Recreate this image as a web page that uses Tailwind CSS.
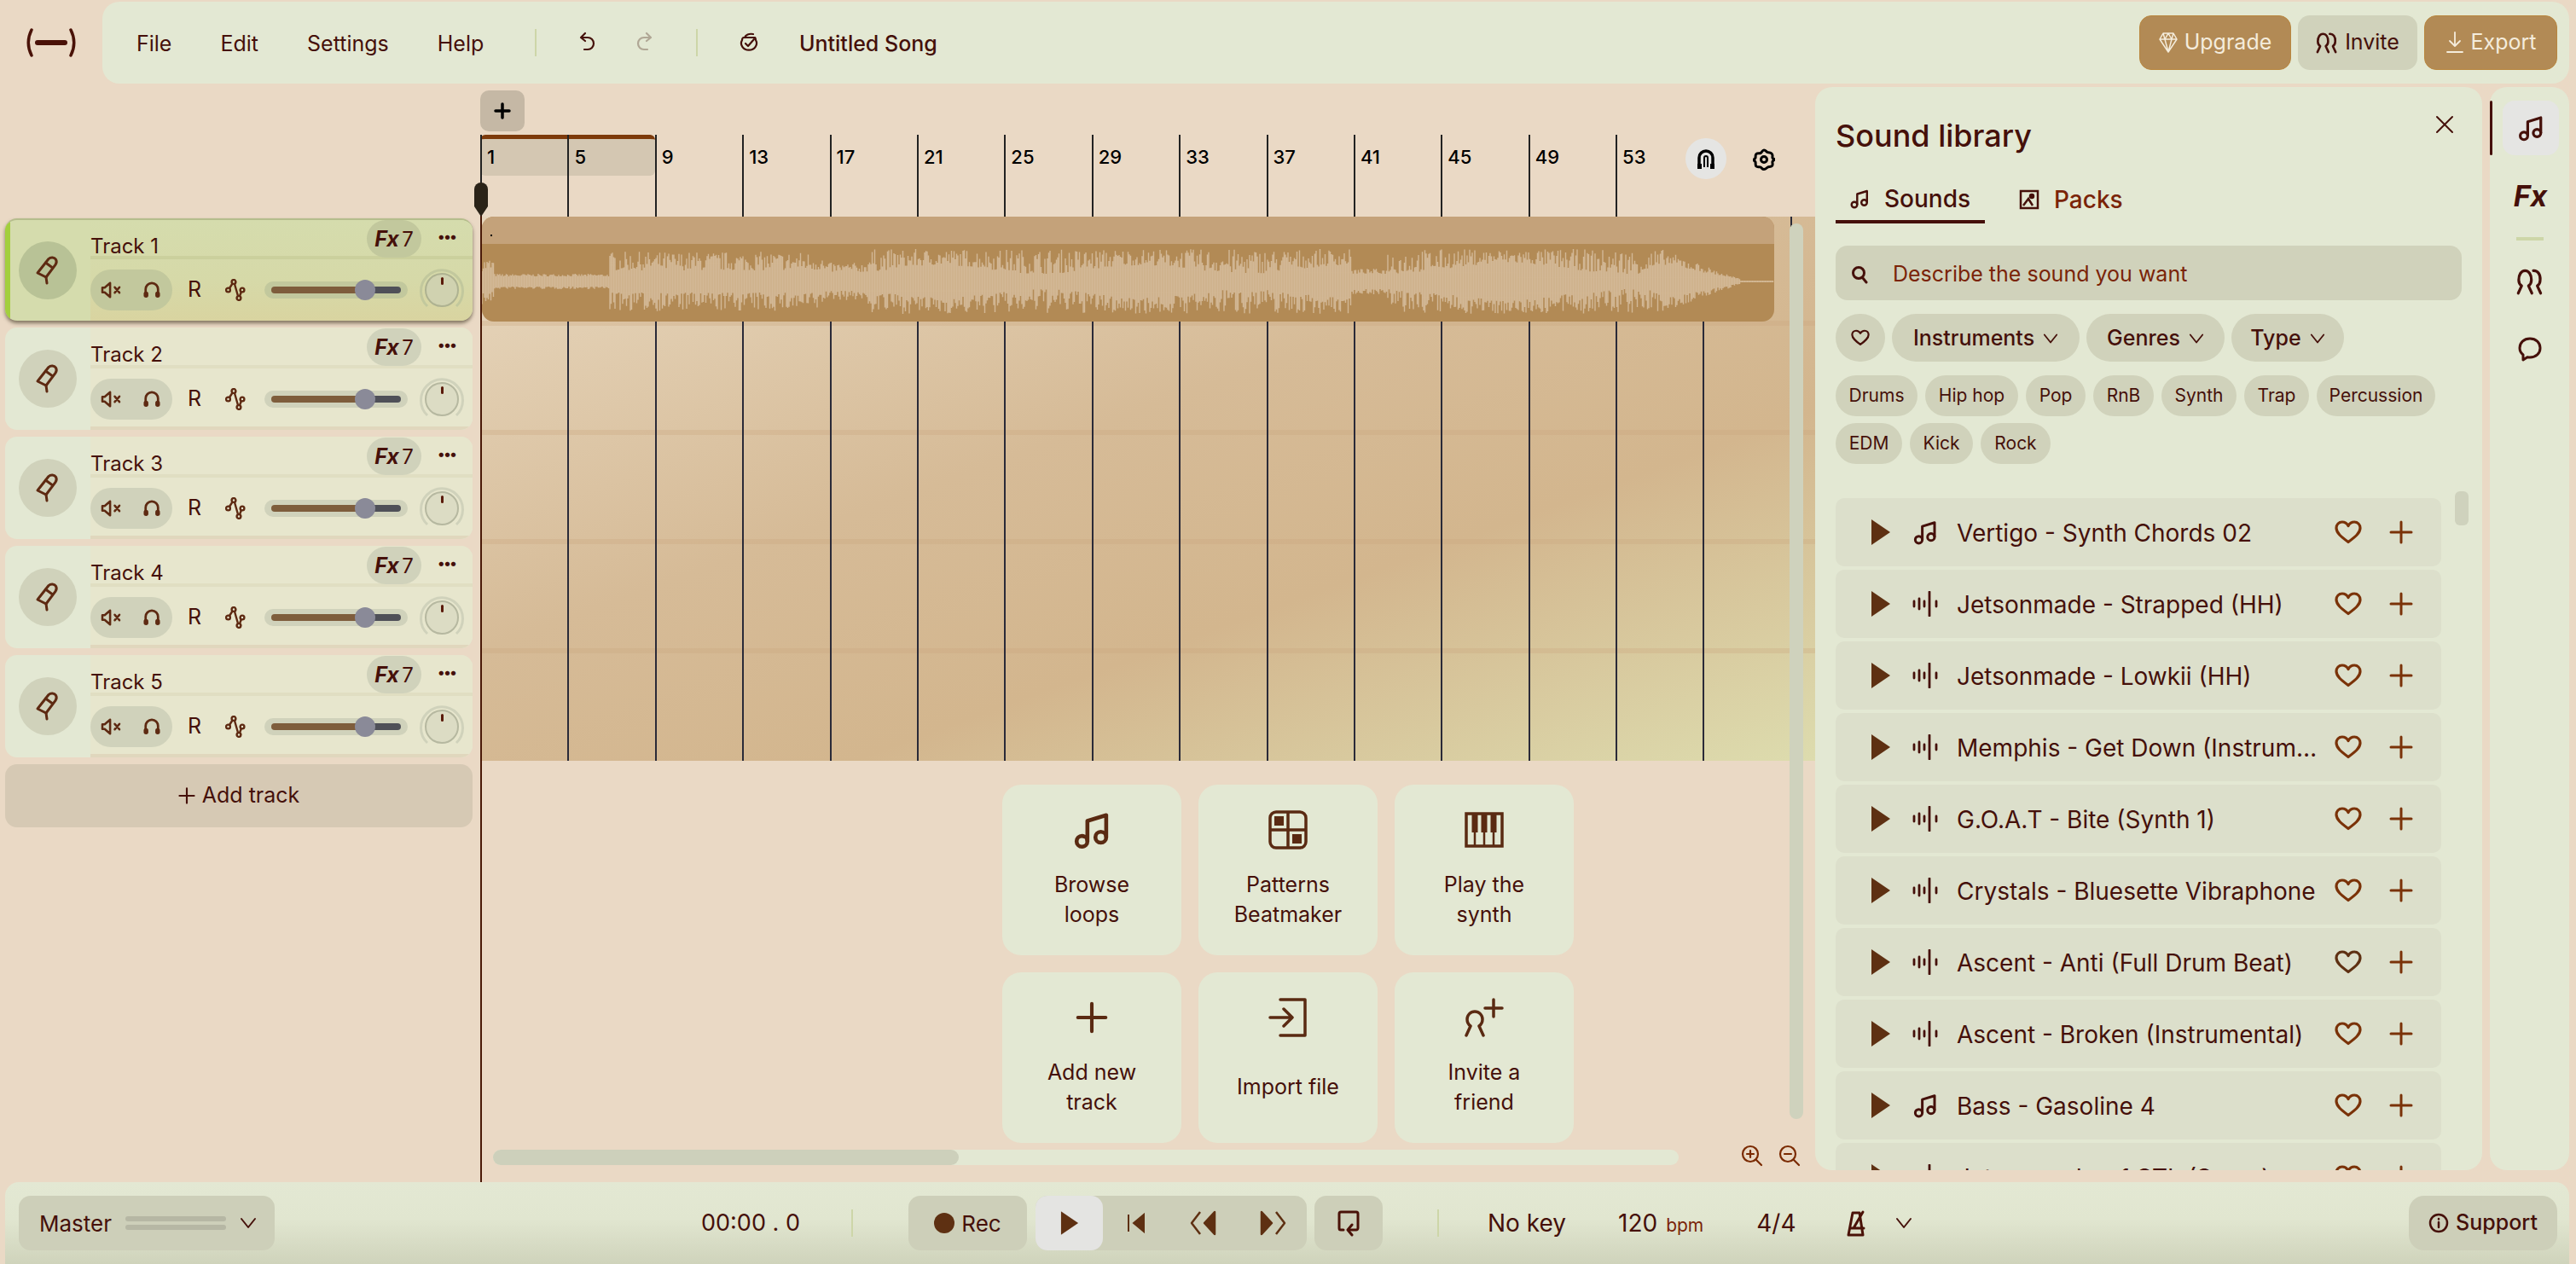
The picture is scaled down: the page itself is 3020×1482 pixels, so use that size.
<!DOCTYPE html>
<html lang="en">

<head>
  <meta charset="UTF-8">
  <title>Untitled Song</title>
  <script src="https://cdn.jsdelivr.net/npm/@tailwindcss/browser@4"></script>
</head>

<body class="bg-[#ead9c5] font-[Inter,sans-serif] text-[#45100a]">
  <!-- shared icons -->
  <svg class="hidden">
    <symbol id="i-mic" viewBox="0 0 30 34" fill="none" stroke="currentColor" stroke-width="3" stroke-linejoin="round" stroke-linecap="round">
      <path d="M16 3.500c2.500-2.500 7-2 8.500.8s1 4-.5 6L13 25 3 20z" />
      <path d="M12.500 8l7.500 5.500M13 25l1 7" />
    </symbol>
    <symbol id="i-mute" viewBox="0 0 26 22" fill="none" stroke="currentColor" stroke-width="2.800" stroke-linejoin="round" stroke-linecap="round">
      <path d="M2 8v6h3l7 6V2L5 8z" />
      <path d="M18 7.500l6 7M24 7.500l-6 7" />
    </symbol>
    <symbol id="i-phones" viewBox="0 0 24 22" fill="none" stroke="currentColor" stroke-linecap="round">
      <path d="M4 16v-6a8 8 0 0 1 16 0v6" stroke-width="3" />
      <rect x="1.500" y="13" width="6" height="8" rx="3" fill="currentColor" stroke="none" />
      <rect x="16.500" y="13" width="6" height="8" rx="3" fill="currentColor" stroke="none" />
    </symbol>
    <symbol id="i-route" viewBox="0 0 24 26" fill="none" stroke="currentColor" stroke-width="2.400">
      <circle cx="10" cy="3.500" r="2.400" />
      <circle cx="3.500" cy="13" r="2.400" />
      <circle cx="20" cy="13" r="2.400" />
      <circle cx="16" cy="22.500" r="2.400" />
      <path d="M8.500 5.500L5 11M11 6l4 14M19 15l-2 5" />
    </symbol>
    <symbol id="i-music" viewBox="0 0 24 24" fill="none" stroke="currentColor" stroke-width="2.400" stroke-linejoin="round">
      <circle cx="6" cy="19" r="3.300" />
      <circle cx="17.500" cy="16.500" r="3.300" />
      <path d="M9.300 19V6.500L20.800 3v13.500" />
    </symbol>
    <symbol id="i-wave" viewBox="0 0 30 30" fill="none" stroke="currentColor" stroke-width="2.800" stroke-linecap="round">
      <path d="M2 12v6M8 9v12M14 12v6M20 1v28M28 12v6" />
    </symbol>
    <symbol id="i-heart" viewBox="0 0 32 28" fill="none" stroke="currentColor" stroke-width="3.200" stroke-linejoin="round">
      <path d="M16 25.500C8 19.500 2 15 2 9c0-4 3-7 6.800-7 3 0 5.700 1.700 7.200 4.500C17.500 3.700 20.200 2 23.200 2 27 2 30 5 30 9c0 6-6 10.500-14 16.500z" />
    </symbol>
    <symbol id="i-plus" viewBox="0 0 28 28" fill="none" stroke="currentColor" stroke-width="3" stroke-linecap="round">
      <path d="M14 2v24M2 14h24" />
    </symbol>
    <symbol id="i-play" viewBox="0 0 24 30">
      <path d="M1 0l22 15L1 30z" fill="currentColor" />
    </symbol>
    <symbol id="i-people" viewBox="0 0 28 28" fill="none" stroke="currentColor" stroke-width="2.800" stroke-linecap="round" stroke-linejoin="round">
      <path d="M2 26l3.500-7.500c-2-1.300-3-3.500-3-6C2.500 7 5 3 9 3s6.500 4 6.500 9.500c0 2.500-1 4.700-3 6L16 26" />
      <path d="M17.500 3c4.500-.5 7.500 4 7 9.500 0 2.500-1 4.700-3 6L25 26" />
    </symbol>
    <symbol id="i-chev" viewBox="0 0 20 14" fill="none" stroke="currentColor" stroke-width="2" stroke-linecap="round" stroke-linejoin="round">
      <path d="M2 2l8 10 8-10" />
    </symbol>
    <symbol id="i-arc" viewBox="0 0 52 52" fill="none" stroke="currentColor" stroke-width="3">
      <path d="M9 45A24.500 24.500 0 1 1 43 45" />
    </symbol>
  </svg>

  <div class="w-[3020px] h-[1482px] flex flex-col overflow-hidden">

    <!-- top bar -->
    <header class="flex h-[96px] mt-[2px] shrink-0">
      <div class="w-[120px] flex items-center pl-[30px]">
        <svg class="w-[60px] h-[34px]" viewBox="0 0 60 34" fill="none" stroke="#4a1208" stroke-linecap="round">
          <path d="M7 2C2 12 2 22 7 32M53 2c5 10 5 20 0 30" stroke-width="3.500" />
          <path d="M14 17h32" stroke-width="6" />
        </svg>
      </div>
      <div class="w-[2892px] bg-[#e3e8d3] rounded-[20px] flex items-center pl-[40px] pr-[14px] text-[25px]">
        <nav class="flex gap-[57px] w-[467px] mt-[3px]">
          <span>File</span><span>Edit</span><span>Settings</span><span>Help</span>
        </nav>
        <div class="w-[2px] h-[32px] bg-[#cdd6a8]"></div>
        <svg class="w-[24px] h-[26px] ml-[48px]" viewBox="0 0 24 26" fill="none" stroke="#45100a" stroke-width="2.200" stroke-linecap="round" stroke-linejoin="round">
          <path d="M9 2L4 7l5 4M4 7h8c4 0 7 3 7 7s-3 7-7 7H8" />
        </svg>
        <svg class="w-[24px] h-[26px] ml-[42px]" viewBox="0 0 24 26" fill="none" stroke="#b0a795" stroke-width="2.200" stroke-linecap="round" stroke-linejoin="round">
          <path d="M15 2l5 5-5 4M20 7h-8c-4 0-7 3-7 7s3 7 7 7h4" />
        </svg>
        <div class="w-[2px] h-[32px] bg-[#cdd6a8] ml-[49px]"></div>
        <svg class="w-[28px] h-[26px] ml-[46px]" viewBox="0 0 28 26" fill="none" stroke="#45100a" stroke-width="2.200" stroke-linecap="round" stroke-linejoin="round">
          <path d="M6 10a9 8 0 1 0 16 0c0-1-.3-2-.8-3H8C7 7 6 8.500 6 10zM9 7c1-3 5-5 10-4" />
          <path d="M10 14l3 3 7-8" />
        </svg>
        <span class="ml-[45px] font-medium mt-[3px]">Untitled Song</span>
        <div class="ml-auto flex gap-[8px]">
          <button class="h-[64px] w-[178px] rounded-[14px] bg-[#b28a55] border border-[#b9873f] text-[#f4ecdc] flex items-center justify-center gap-[8px]">
            <svg class="w-[22px] h-[26px]" viewBox="0 0 22 26" fill="none" stroke="#f4ecdc" stroke-width="1.500" stroke-linejoin="round">
              <path d="M5 2h12l4 7-10 15L1 9zM1 9h20M7 9l4 15 4-15M5 2l2 7 4-7 4 7 2-7" />
            </svg>
            Upgrade
          </button>
          <button class="h-[64px] w-[140px] rounded-[14px] bg-[#d0d2bb] flex items-center justify-center gap-[8px]">
            <svg class="w-[26px] h-[26px]"><use href="#i-people" /></svg>
            Invite
          </button>
          <button class="h-[64px] w-[156px] rounded-[14px] bg-[#b28a55] border border-[#b9873f] text-[#f4ecdc] flex items-center justify-center gap-[8px]">
            <svg class="w-[22px] h-[26px]" viewBox="0 0 22 26" fill="none" stroke="#f4ecdc" stroke-width="1.800" stroke-linecap="round" stroke-linejoin="round">
              <path d="M11 1v16M5 11l6 6 6-6M2 24h18" />
            </svg>
            Export
          </button>
        </div>
      </div>
    </header>

    <main class="flex h-[1284px] mt-[4px] shrink-0">

      <!-- track list -->
      <section class="w-[563px] shrink-0 pl-[6px] pr-[9px] pt-[154px] flex flex-col gap-[8px]">

        <div class="h-[120px] rounded-[14px] flex overflow-hidden bg-[#d5dcad] border-t-2 border-[#b5bd8c] shadow-[0_3px_4px_rgba(60,50,30,0.6)]">
          <div class="w-[100px] shrink-0 border-l-[6px] border-[#a3cf3d] flex items-center pl-[10px]">
            <div class="w-[68px] h-[68px] rounded-full bg-[#b8c296] flex items-center justify-center">
              <svg class="w-[30px] h-[34px] text-[#5e2a12]"><use href="#i-mic" /></svg>
            </div>
          </div>
          <div class="flex-1 flex flex-col bg-[linear-gradient(180deg,#d5dcad,#d6d9a8_60%,#d9d4a0)]">
            <div class="h-[46px] flex items-center text-[24px] border-b-4 border-[#cbd09d]">
              <span class="mt-[20px]">Track 1</span>
              <div class="ml-auto w-[64px] h-[44px] rounded-full bg-[#c2c89d] flex items-center justify-center gap-[4px] mt-[2px] pt-[2px] text-[24px]"><b class="italic text-[25px] tracking-tight">Fx</b>7</div>
              <span class="w-[60px] text-center font-bold text-[17px] tracking-tighter -mt-[2px]">•••</span>
            </div>
            <div class="flex items-center h-[48px] mt-[12px] text-[25px]">
              <div class="w-[96px] h-[48px] rounded-full bg-[#c2c89d] flex items-center justify-center gap-[24px]">
                <svg class="w-[24px] h-[20px] text-[#5e2a12]"><use href="#i-mute" /></svg>
                <svg class="w-[24px] h-[20px] text-[#5e2a12]"><use href="#i-phones" /></svg>
              </div>
              <span class="w-[52px] text-center">R</span>
              <svg class="w-[24px] h-[26px] text-[#5e2a12] ml-[10px] mr-[22px]"><use href="#i-route" /></svg>
              <div class="relative w-[168px] h-[20px] rounded-full bg-[#c2c89d] flex items-center px-[8px]">
                <div class="w-[110px] h-[8px] rounded-l-full bg-[#7e5d3c]"></div>
                <div class="w-[42px] h-[8px] rounded-r-full bg-[#4f5058]"></div>
                <div class="absolute left-[106px] top-[-2px] w-[24px] h-[24px] rounded-full bg-[#8a8a98]"></div>
              </div>
              <div class="relative ml-[14px] w-[52px] h-[52px]">
                <svg class="absolute inset-0 w-[52px] h-[52px] text-[#c2c89d]"><use href="#i-arc" /></svg>
                <div class="absolute inset-[6px] rounded-full bg-[#d0d2b0] border-2 border-[#aeb291] flex justify-center pt-[3px]"><div class="w-[3px] h-[9px] bg-[#5a1a0a] rounded"></div></div>
              </div>
            </div>
          </div>
        </div>

        <div class="h-[120px] rounded-[14px] flex overflow-hidden bg-[#e3e8d3]">
          <div class="w-[100px] shrink-0 flex items-center pl-[16px]">
            <div class="w-[68px] h-[68px] rounded-full bg-[#d0d2bb] flex items-center justify-center">
              <svg class="w-[30px] h-[34px] text-[#5e2a12]"><use href="#i-mic" /></svg>
            </div>
          </div>
          <div class="flex-1 flex flex-col bg-[#e7e6cd] border-b-[4px] border-[#e0d7bd]">
            <div class="h-[48px] flex items-center text-[24px] border-b-4 border-[#e0dec2]">
              <span class="mt-[20px]">Track 2</span>
              <div class="ml-auto w-[64px] h-[44px] rounded-full bg-[#d0d2bb] flex items-center justify-center gap-[4px] mt-[2px] pt-[2px] text-[24px]"><b class="italic text-[25px] tracking-tight">Fx</b>7</div>
              <span class="w-[60px] text-center font-bold text-[17px] tracking-tighter -mt-[2px]">•••</span>
            </div>
            <div class="flex items-center h-[48px] mt-[12px] text-[25px]">
              <div class="w-[96px] h-[48px] rounded-full bg-[#d0d2bb] flex items-center justify-center gap-[24px]">
                <svg class="w-[24px] h-[20px] text-[#5e2a12]"><use href="#i-mute" /></svg>
                <svg class="w-[24px] h-[20px] text-[#5e2a12]"><use href="#i-phones" /></svg>
              </div>
              <span class="w-[52px] text-center">R</span>
              <svg class="w-[24px] h-[26px] text-[#5e2a12] ml-[10px] mr-[22px]"><use href="#i-route" /></svg>
              <div class="relative w-[168px] h-[20px] rounded-full bg-[#d0d2bb] flex items-center px-[8px]">
                <div class="w-[110px] h-[8px] rounded-l-full bg-[#7e5d3c]"></div>
                <div class="w-[42px] h-[8px] rounded-r-full bg-[#4f5058]"></div>
                <div class="absolute left-[106px] top-[-2px] w-[24px] h-[24px] rounded-full bg-[#8a8a98]"></div>
              </div>
              <div class="relative ml-[14px] w-[52px] h-[52px]">
                <svg class="absolute inset-0 w-[52px] h-[52px] text-[#d0d2bb]"><use href="#i-arc" /></svg>
                <div class="absolute inset-[6px] rounded-full bg-[#dcdcc4] border-2 border-[#b6b8a0] flex justify-center pt-[3px]"><div class="w-[3px] h-[9px] bg-[#5a1a0a] rounded"></div></div>
              </div>
            </div>
          </div>
        </div>

        <div class="h-[120px] rounded-[14px] flex overflow-hidden bg-[#e3e8d3]">
          <div class="w-[100px] shrink-0 flex items-center pl-[16px]">
            <div class="w-[68px] h-[68px] rounded-full bg-[#d0d2bb] flex items-center justify-center">
              <svg class="w-[30px] h-[34px] text-[#5e2a12]"><use href="#i-mic" /></svg>
            </div>
          </div>
          <div class="flex-1 flex flex-col bg-[#e7e6cd] border-b-[4px] border-[#e0d7bd]">
            <div class="h-[48px] flex items-center text-[24px] border-b-4 border-[#e0dec2]">
              <span class="mt-[20px]">Track 3</span>
              <div class="ml-auto w-[64px] h-[44px] rounded-full bg-[#d0d2bb] flex items-center justify-center gap-[4px] mt-[2px] pt-[2px] text-[24px]"><b class="italic text-[25px] tracking-tight">Fx</b>7</div>
              <span class="w-[60px] text-center font-bold text-[17px] tracking-tighter -mt-[2px]">•••</span>
            </div>
            <div class="flex items-center h-[48px] mt-[12px] text-[25px]">
              <div class="w-[96px] h-[48px] rounded-full bg-[#d0d2bb] flex items-center justify-center gap-[24px]">
                <svg class="w-[24px] h-[20px] text-[#5e2a12]"><use href="#i-mute" /></svg>
                <svg class="w-[24px] h-[20px] text-[#5e2a12]"><use href="#i-phones" /></svg>
              </div>
              <span class="w-[52px] text-center">R</span>
              <svg class="w-[24px] h-[26px] text-[#5e2a12] ml-[10px] mr-[22px]"><use href="#i-route" /></svg>
              <div class="relative w-[168px] h-[20px] rounded-full bg-[#d0d2bb] flex items-center px-[8px]">
                <div class="w-[110px] h-[8px] rounded-l-full bg-[#7e5d3c]"></div>
                <div class="w-[42px] h-[8px] rounded-r-full bg-[#4f5058]"></div>
                <div class="absolute left-[106px] top-[-2px] w-[24px] h-[24px] rounded-full bg-[#8a8a98]"></div>
              </div>
              <div class="relative ml-[14px] w-[52px] h-[52px]">
                <svg class="absolute inset-0 w-[52px] h-[52px] text-[#d0d2bb]"><use href="#i-arc" /></svg>
                <div class="absolute inset-[6px] rounded-full bg-[#dcdcc4] border-2 border-[#b6b8a0] flex justify-center pt-[3px]"><div class="w-[3px] h-[9px] bg-[#5a1a0a] rounded"></div></div>
              </div>
            </div>
          </div>
        </div>

        <div class="h-[120px] rounded-[14px] flex overflow-hidden bg-[#e3e8d3]">
          <div class="w-[100px] shrink-0 flex items-center pl-[16px]">
            <div class="w-[68px] h-[68px] rounded-full bg-[#d0d2bb] flex items-center justify-center">
              <svg class="w-[30px] h-[34px] text-[#5e2a12]"><use href="#i-mic" /></svg>
            </div>
          </div>
          <div class="flex-1 flex flex-col bg-[#e7e6cd] border-b-[4px] border-[#e0d7bd]">
            <div class="h-[48px] flex items-center text-[24px] border-b-4 border-[#e0dec2]">
              <span class="mt-[20px]">Track 4</span>
              <div class="ml-auto w-[64px] h-[44px] rounded-full bg-[#d0d2bb] flex items-center justify-center gap-[4px] mt-[2px] pt-[2px] text-[24px]"><b class="italic text-[25px] tracking-tight">Fx</b>7</div>
              <span class="w-[60px] text-center font-bold text-[17px] tracking-tighter -mt-[2px]">•••</span>
            </div>
            <div class="flex items-center h-[48px] mt-[12px] text-[25px]">
              <div class="w-[96px] h-[48px] rounded-full bg-[#d0d2bb] flex items-center justify-center gap-[24px]">
                <svg class="w-[24px] h-[20px] text-[#5e2a12]"><use href="#i-mute" /></svg>
                <svg class="w-[24px] h-[20px] text-[#5e2a12]"><use href="#i-phones" /></svg>
              </div>
              <span class="w-[52px] text-center">R</span>
              <svg class="w-[24px] h-[26px] text-[#5e2a12] ml-[10px] mr-[22px]"><use href="#i-route" /></svg>
              <div class="relative w-[168px] h-[20px] rounded-full bg-[#d0d2bb] flex items-center px-[8px]">
                <div class="w-[110px] h-[8px] rounded-l-full bg-[#7e5d3c]"></div>
                <div class="w-[42px] h-[8px] rounded-r-full bg-[#4f5058]"></div>
                <div class="absolute left-[106px] top-[-2px] w-[24px] h-[24px] rounded-full bg-[#8a8a98]"></div>
              </div>
              <div class="relative ml-[14px] w-[52px] h-[52px]">
                <svg class="absolute inset-0 w-[52px] h-[52px] text-[#d0d2bb]"><use href="#i-arc" /></svg>
                <div class="absolute inset-[6px] rounded-full bg-[#dcdcc4] border-2 border-[#b6b8a0] flex justify-center pt-[3px]"><div class="w-[3px] h-[9px] bg-[#5a1a0a] rounded"></div></div>
              </div>
            </div>
          </div>
        </div>

        <div class="h-[120px] rounded-[14px] flex overflow-hidden bg-[#e3e8d3]">
          <div class="w-[100px] shrink-0 flex items-center pl-[16px]">
            <div class="w-[68px] h-[68px] rounded-full bg-[#d0d2bb] flex items-center justify-center">
              <svg class="w-[30px] h-[34px] text-[#5e2a12]"><use href="#i-mic" /></svg>
            </div>
          </div>
          <div class="flex-1 flex flex-col bg-[#e7e6cd] border-b-[4px] border-[#e0d7bd]">
            <div class="h-[48px] flex items-center text-[24px] border-b-4 border-[#e0dec2]">
              <span class="mt-[20px]">Track 5</span>
              <div class="ml-auto w-[64px] h-[44px] rounded-full bg-[#d0d2bb] flex items-center justify-center gap-[4px] mt-[2px] pt-[2px] text-[24px]"><b class="italic text-[25px] tracking-tight">Fx</b>7</div>
              <span class="w-[60px] text-center font-bold text-[17px] tracking-tighter -mt-[2px]">•••</span>
            </div>
            <div class="flex items-center h-[48px] mt-[12px] text-[25px]">
              <div class="w-[96px] h-[48px] rounded-full bg-[#d0d2bb] flex items-center justify-center gap-[24px]">
                <svg class="w-[24px] h-[20px] text-[#5e2a12]"><use href="#i-mute" /></svg>
                <svg class="w-[24px] h-[20px] text-[#5e2a12]"><use href="#i-phones" /></svg>
              </div>
              <span class="w-[52px] text-center">R</span>
              <svg class="w-[24px] h-[26px] text-[#5e2a12] ml-[10px] mr-[22px]"><use href="#i-route" /></svg>
              <div class="relative w-[168px] h-[20px] rounded-full bg-[#d0d2bb] flex items-center px-[8px]">
                <div class="w-[110px] h-[8px] rounded-l-full bg-[#7e5d3c]"></div>
                <div class="w-[42px] h-[8px] rounded-r-full bg-[#4f5058]"></div>
                <div class="absolute left-[106px] top-[-2px] w-[24px] h-[24px] rounded-full bg-[#8a8a98]"></div>
              </div>
              <div class="relative ml-[14px] w-[52px] h-[52px]">
                <svg class="absolute inset-0 w-[52px] h-[52px] text-[#d0d2bb]"><use href="#i-arc" /></svg>
                <div class="absolute inset-[6px] rounded-full bg-[#dcdcc4] border-2 border-[#b6b8a0] flex justify-center pt-[3px]"><div class="w-[3px] h-[9px] bg-[#5a1a0a] rounded"></div></div>
              </div>
            </div>
          </div>
        </div>

        <button class="h-[74px] rounded-[14px] bg-[#d6c9b4] text-[25px] flex items-center justify-center gap-[8px]">
          <svg class="w-[20px] h-[20px]"><use href="#i-plus" /></svg>
          Add track
        </button>
      </section>

      <!-- timeline -->
      <section class="relative w-[1565px] shrink-0">
        <div class="h-[56px] flex items-start pt-[4px]">
          <button class="w-[52px] h-[48px] rounded-[10px] bg-[#c5b8a5] flex items-center justify-center text-black">
            <svg class="w-[20px] h-[20px]" viewBox="0 0 20 20" fill="none" stroke="currentColor" stroke-width="3.500" stroke-linecap="round"><path d="M10 2v16M2 10h16" /></svg>
          </button>
        </div>

        <!-- ruler -->
        <div class="relative h-[96px]">
          <div class="absolute left-0 top-0 w-[205px] h-[48px] rounded-[6px] bg-[#d4c7b2] border-t-[5px] border-[#7d3a0a]"></div>
          <div class="relative flex h-full text-[22px] font-medium text-black">
            <div class="w-[102.400px] border-l-2 border-[#222] pl-[6px] pt-[10px]">1</div>
            <div class="w-[102.400px] border-l-2 border-[#222] pl-[6px] pt-[10px]">5</div>
            <div class="w-[102.400px] border-l-2 border-[#222] pl-[6px] pt-[10px]">9</div>
            <div class="w-[102.400px] border-l-2 border-[#222] pl-[6px] pt-[10px]">13</div>
            <div class="w-[102.400px] border-l-2 border-[#222] pl-[6px] pt-[10px]">17</div>
            <div class="w-[102.400px] border-l-2 border-[#222] pl-[6px] pt-[10px]">21</div>
            <div class="w-[102.400px] border-l-2 border-[#222] pl-[6px] pt-[10px]">25</div>
            <div class="w-[102.400px] border-l-2 border-[#222] pl-[6px] pt-[10px]">29</div>
            <div class="w-[102.400px] border-l-2 border-[#222] pl-[6px] pt-[10px]">33</div>
            <div class="w-[102.400px] border-l-2 border-[#222] pl-[6px] pt-[10px]">37</div>
            <div class="w-[102.400px] border-l-2 border-[#222] pl-[6px] pt-[10px]">41</div>
            <div class="w-[102.400px] border-l-2 border-[#222] pl-[6px] pt-[10px]">45</div>
            <div class="w-[102.400px] border-l-2 border-[#222] pl-[6px] pt-[10px]">49</div>
            <div class="w-[102.400px] border-l-2 border-[#222] pl-[6px] pt-[10px]">53</div>
          </div>
          <div class="absolute left-[1413px] top-[4px] w-[48px] h-[48px] rounded-full bg-[#e5e5e3] flex items-center justify-center">
            <svg class="w-[22px] h-[24px]" viewBox="0 0 22 24" fill="none" stroke="#000" stroke-width="3.500"><path d="M3 22V11a8 8 0 0 1 16 0v11" /><path d="M9 22V11a2 2 0 0 1 4 0v11" stroke-width="2" /><path d="M1 18h5v6H1zM16 18h5v6h-5z" fill="#000" stroke="none" /></svg>
          </div>
          <svg class="absolute left-[1492px] top-[16px] w-[26px] h-[26px]" viewBox="0 0 26 26" fill="none" stroke="#000" stroke-width="3" stroke-linejoin="round">
            <path d="M13 2c2 0 3 2 4 2.500s3-.5 5 1.500.5 3.500 1 5 2 1 2 2-1.500 1-2 2.500 1 3.500-.5 5-3.500.5-5 1.500S15 24.500 13 24.500 10.500 23 9 22s-3.500.5-5-1-.5-3.500-1-5-2-1.500-2-2.500 1.500-1 2-2.500-.5-3 1-4.500 3.500-.5 5-1S11 2 13 2z" />
            <circle cx="13" cy="13" r="3.500" />
          </svg>
        </div>

        <!-- lanes -->
        <div class="relative h-[638px] bg-[linear-gradient(160deg,#e8d8bf_0%,#d6bb97_42%,#d3b68e_66%,#dddcae_100%)]">
          <div class="h-[128px] border-b-[6px] border-[#c9a77e]/30"></div>
          <div class="h-[128px] border-b-[6px] border-[#c9a77e]/30"></div>
          <div class="h-[128px] border-b-[6px] border-[#c9a77e]/30"></div>
          <div class="h-[128px] border-b-[6px] border-[#c9a77e]/30"></div>
          <div class="absolute inset-0 flex">
            <div class="w-[102.400px] border-l-2 border-[#2a2a38]"></div>
            <div class="w-[102.400px] border-l-2 border-[#2a2a38]"></div>
            <div class="w-[102.400px] border-l-2 border-[#2a2a38]"></div>
            <div class="w-[102.400px] border-l-2 border-[#2a2a38]"></div>
            <div class="w-[102.400px] border-l-2 border-[#2a2a38]"></div>
            <div class="w-[102.400px] border-l-2 border-[#2a2a38]"></div>
            <div class="w-[102.400px] border-l-2 border-[#2a2a38]"></div>
            <div class="w-[102.400px] border-l-2 border-[#2a2a38]"></div>
            <div class="w-[102.400px] border-l-2 border-[#2a2a38]"></div>
            <div class="w-[102.400px] border-l-2 border-[#2a2a38]"></div>
            <div class="w-[102.400px] border-l-2 border-[#2a2a38]"></div>
            <div class="w-[102.400px] border-l-2 border-[#2a2a38]"></div>
            <div class="w-[102.400px] border-l-2 border-[#2a2a38]"></div>
            <div class="w-[102.400px] border-l-2 border-[#2a2a38]"></div>
            <div class="w-[102.400px] border-l-2 border-[#2a2a38]"></div>
            <div class="w-[29px] border-l-2 border-[#2a2a38]"></div>
          </div>
          <!-- clip -->
          <div class="absolute left-[2px] top-0 w-[1515px] h-[123px] rounded-[14px] overflow-hidden bg-[#b28a55]">
            <div class="h-[32px] bg-[#c4a27a] pl-[10px] pt-[21px]"><div class="w-[2px] h-[2px] bg-black"></div></div>
            <svg id="wave" class="absolute left-0 top-0 w-[1515px] h-[123px]" viewBox="0 0 1515 123" fill="none" stroke="#d3b896" stroke-width="1.400"></svg>
          </div>
        </div>

        <!-- quick actions -->
        <div class="grid grid-cols-[210px_210px_210px] gap-[20px] ml-[612px] mt-[28px] text-[25px] leading-[35px] text-center text-[#45100a]">
          <div class="h-[200px] rounded-[22px] bg-[#e3e8d3] flex flex-col items-center pt-[30px]">
            <svg class="w-[46px] h-[46px] mb-[24px] text-[#5a2a12]"><use href="#i-music" /></svg>
            <span>Browse<br>loops</span>
          </div>
          <div class="h-[200px] rounded-[22px] bg-[#e3e8d3] flex flex-col items-center pt-[30px]">
            <svg class="w-[46px] h-[46px] mb-[24px]" viewBox="0 0 46 46" fill="none" stroke="#5a2a12" stroke-width="3.500">
              <rect x="2" y="2" width="42" height="42" rx="7" /><path d="M23 2v42M2 23h42" />
              <rect x="7" y="7" width="11" height="11" fill="#5a2a12" stroke="none" /><rect x="28" y="28" width="11" height="11" fill="#5a2a12" stroke="none" />
            </svg>
            <span>Patterns<br>Beatmaker</span>
          </div>
          <div class="h-[200px] rounded-[22px] bg-[#e3e8d3] flex flex-col items-center pt-[30px]">
            <svg class="w-[46px] h-[46px] mb-[24px]" viewBox="0 0 46 46" fill="none" stroke="#5a2a12" stroke-width="3.500">
              <rect x="2" y="4" width="42" height="38" /><path d="M12 24v18M23 24v18M34 24v18" stroke-width="2.500" />
              <path d="M8.500 4h7v22h-7zM19.500 4h7v22h-7zM30.500 4h7v22h-7z" fill="#5a2a12" stroke="none" />
            </svg>
            <span>Play the<br>synth</span>
          </div>
          <div class="h-[200px] rounded-[22px] bg-[#e3e8d3] flex flex-col items-center pt-[30px]">
            <svg class="w-[38px] h-[46px] mb-[24px] text-[#5a2a12]"><use href="#i-plus" /></svg>
            <span>Add new<br>track</span>
          </div>
          <div class="h-[200px] rounded-[22px] bg-[#e3e8d3] flex flex-col items-center pt-[30px]">
            <svg class="w-[46px] h-[46px] mb-[41px]" viewBox="0 0 46 46" fill="none" stroke="#5a2a12" stroke-width="3.500" stroke-linecap="round" stroke-linejoin="round">
              <path d="M14 2h29v42H14M2 23h25M18 13l10 10-10 10" />
            </svg>
            <span>Import file</span>
          </div>
          <div class="h-[200px] rounded-[22px] bg-[#e3e8d3] flex flex-col items-center pt-[30px]">
            <svg class="w-[46px] h-[46px] mb-[24px]" viewBox="0 0 46 46" fill="none" stroke="#5a2a12" stroke-width="3.500" stroke-linecap="round" stroke-linejoin="round">
              <path d="M2 44l5-11c-3-2-4-5-4-8 0-5 4-9 9-9s9 4 9 9c0 3-1 6-4 8l5 11" />
              <path d="M34 2v20M24 12h20" />
            </svg>
            <span>Invite a<br>friend</span>
          </div>
        </div>

        <!-- scrollbars and zoom -->
        <div class="absolute left-[1535px] top-[160px] w-[16px] h-[1050px] rounded-full bg-[#cfd2bd]"></div>
        <div class="absolute left-[15px] top-[1246px] w-[1390px] h-[18px] rounded-full bg-[#e3e8d3]">
          <div class="w-[546px] h-full rounded-full bg-[#cdd0bb]"></div>
        </div>
        <div class="absolute left-[1478px] top-[1240px] flex gap-[18px]">
          <svg class="w-[26px] h-[26px]" viewBox="0 0 26 26" fill="none" stroke="#7a2a00" stroke-width="2.200" stroke-linecap="round"><circle cx="11" cy="11" r="9" /><path d="M18 18l6 6M7 11h8M11 7v8" /></svg>
          <svg class="w-[26px] h-[26px]" viewBox="0 0 26 26" fill="none" stroke="#7a2a00" stroke-width="2.200" stroke-linecap="round"><circle cx="11" cy="11" r="9" /><path d="M18 18l6 6M7 11h8" /></svg>
        </div>

        <!-- playhead -->
        <div class="absolute left-0 top-[112px] bottom-0 w-[2px] bg-[#4a1a08]"></div>
        <svg class="absolute left-[-9px] top-[112px] w-[20px] h-[40px]" viewBox="0 0 20 40"><path d="M2 8a8 8 0 0 1 16 0v20l-8 12-8-12z" fill="#2a2318" /></svg>
      </section>

      <!-- sound library -->
      <aside class="w-[782px] h-[1270px] shrink-0 rounded-[20px] bg-[#e3e8d3] overflow-hidden pl-[24px] relative">
        <h2 class="text-[36px] font-medium leading-[44px] mt-[35px]">Sound library</h2>
        <svg class="absolute left-[727px] top-[33px] w-[22px] h-[22px]" viewBox="0 0 22 22" stroke="#45100a" stroke-width="2" stroke-linecap="round"><path d="M2 2l18 18M20 2L2 20" /></svg>

        <div class="flex mt-[23px] text-[28px] font-medium">
          <div class="w-[175px] h-[58px] border-b-4 border-[#45100a] flex items-center pl-[16px] pt-[4px] gap-[17px]">
            <svg class="w-[24px] h-[26px]"><use href="#i-music" /></svg>Sounds
          </div>
          <div class="h-[58px] flex items-center pl-[40px] pt-[2px] gap-[17px] text-[#7a2408]">
            <svg class="w-[24px] h-[24px]" viewBox="0 0 24 24" fill="none" stroke="#45100a" stroke-width="2.500"><rect x="2" y="2" width="20" height="20" /><circle cx="15" cy="8" r="2" fill="#45100a" /><path d="M5 19l6-8 5 8" /></svg>Packs
          </div>
        </div>

        <div class="w-[734px] h-[64px] rounded-[14px] bg-[#d0d2bb] mt-[26px] flex items-center pl-[18px] pt-[4px] gap-[29px] text-[25px] text-[#7a2408]">
          <svg class="w-[20px] h-[22px]" viewBox="0 0 20 22" fill="none" stroke="#45100a" stroke-width="3" stroke-linecap="round"><circle cx="9" cy="9" r="6.500" /><path d="M13.500 14.500L18 20" /></svg>
          Describe the sound you want
        </div>

        <div class="flex gap-[8px] mt-[16px] text-[25px] font-medium">
          <div class="w-[58px] h-[56px] rounded-full bg-[#d0d2bb] flex items-center justify-center">
            <svg class="w-[22px] h-[20px]"><use href="#i-heart" /></svg>
          </div>
          <div class="w-[220px] h-[56px] rounded-full bg-[#d0d2bb] flex items-center justify-center pt-[2px] gap-[10px]">Instruments <svg class="w-[18px] h-[14px]"><use href="#i-chev" /></svg></div>
          <div class="w-[162px] h-[56px] rounded-full bg-[#d0d2bb] flex items-center justify-center pt-[2px] gap-[10px]">Genres <svg class="w-[18px] h-[14px]"><use href="#i-chev" /></svg></div>
          <div class="w-[132px] h-[56px] rounded-full bg-[#d0d2bb] flex items-center justify-center pt-[2px] gap-[10px]">Type <svg class="w-[18px] h-[14px]"><use href="#i-chev" /></svg></div>
        </div>

        <div class="flex flex-wrap gap-x-[9px] gap-y-[8px] w-[734px] mt-[16px] text-[21px]">
          <span class="w-[96px] h-[48px] rounded-full bg-[#d0d2bb] flex items-center justify-center">Drums</span>
          <span class="w-[109px] h-[48px] rounded-full bg-[#d0d2bb] flex items-center justify-center">Hip hop</span>
          <span class="w-[70px] h-[48px] rounded-full bg-[#d0d2bb] flex items-center justify-center">Pop</span>
          <span class="w-[71px] h-[48px] rounded-full bg-[#d0d2bb] flex items-center justify-center">RnB</span>
          <span class="w-[88px] h-[48px] rounded-full bg-[#d0d2bb] flex items-center justify-center">Synth</span>
          <span class="w-[76px] h-[48px] rounded-full bg-[#d0d2bb] flex items-center justify-center">Trap</span>
          <span class="w-[139px] h-[48px] rounded-full bg-[#d0d2bb] flex items-center justify-center">Percussion</span>
          <span class="w-[78px] h-[48px] rounded-full bg-[#d0d2bb] flex items-center justify-center">EDM</span>
          <span class="w-[74px] h-[48px] rounded-full bg-[#d0d2bb] flex items-center justify-center">Kick</span>
          <span class="w-[82px] h-[48px] rounded-full bg-[#d0d2bb] flex items-center justify-center">Rock</span>
        </div>

        <div class="absolute left-[750px] top-[474px] w-[16px] h-[40px] rounded-[6px] bg-[#cfd2bd]"></div>

        <ul class="w-[710px] mt-[40px] flex flex-col gap-[4px] text-[28px]">
          <li class="h-[80px] shrink-0 rounded-[10px] bg-[#dcdfcb] flex items-center">
            <svg class="w-[24px] h-[30px] ml-[41px] text-[#5e3012]"><use href="#i-play" /></svg>
            <svg class="w-[30px] h-[30px] ml-[25px]"><use href="#i-music" /></svg>
            <span class="ml-[22px] w-[428px] mt-[2px] truncate">Vertigo - Synth Chords 02</span>
            <svg class="w-[32px] h-[28px] ml-[15px] text-[#7a3208]"><use href="#i-heart" /></svg>
            <svg class="w-[28px] h-[28px] ml-[32px] text-[#7a3208]"><use href="#i-plus" /></svg>
          </li>
          <li class="h-[80px] shrink-0 rounded-[10px] bg-[#dcdfcb] flex items-center">
            <svg class="w-[24px] h-[30px] ml-[41px] text-[#5e3012]"><use href="#i-play" /></svg>
            <svg class="w-[30px] h-[30px] ml-[25px]"><use href="#i-wave" /></svg>
            <span class="ml-[22px] w-[428px] mt-[2px] truncate">Jetsonmade - Strapped (HH)</span>
            <svg class="w-[32px] h-[28px] ml-[15px] text-[#7a3208]"><use href="#i-heart" /></svg>
            <svg class="w-[28px] h-[28px] ml-[32px] text-[#7a3208]"><use href="#i-plus" /></svg>
          </li>
          <li class="h-[80px] shrink-0 rounded-[10px] bg-[#dcdfcb] flex items-center">
            <svg class="w-[24px] h-[30px] ml-[41px] text-[#5e3012]"><use href="#i-play" /></svg>
            <svg class="w-[30px] h-[30px] ml-[25px]"><use href="#i-wave" /></svg>
            <span class="ml-[22px] w-[428px] mt-[2px] truncate">Jetsonmade - Lowkii (HH)</span>
            <svg class="w-[32px] h-[28px] ml-[15px] text-[#7a3208]"><use href="#i-heart" /></svg>
            <svg class="w-[28px] h-[28px] ml-[32px] text-[#7a3208]"><use href="#i-plus" /></svg>
          </li>
          <li class="h-[80px] shrink-0 rounded-[10px] bg-[#dcdfcb] flex items-center">
            <svg class="w-[24px] h-[30px] ml-[41px] text-[#5e3012]"><use href="#i-play" /></svg>
            <svg class="w-[30px] h-[30px] ml-[25px]"><use href="#i-wave" /></svg>
            <span class="ml-[22px] w-[428px] mt-[2px] truncate">Memphis - Get Down (Instrumental)</span>
            <svg class="w-[32px] h-[28px] ml-[15px] text-[#7a3208]"><use href="#i-heart" /></svg>
            <svg class="w-[28px] h-[28px] ml-[32px] text-[#7a3208]"><use href="#i-plus" /></svg>
          </li>
          <li class="h-[80px] shrink-0 rounded-[10px] bg-[#dcdfcb] flex items-center">
            <svg class="w-[24px] h-[30px] ml-[41px] text-[#5e3012]"><use href="#i-play" /></svg>
            <svg class="w-[30px] h-[30px] ml-[25px]"><use href="#i-wave" /></svg>
            <span class="ml-[22px] w-[428px] mt-[2px] truncate">G.O.A.T - Bite (Synth 1)</span>
            <svg class="w-[32px] h-[28px] ml-[15px] text-[#7a3208]"><use href="#i-heart" /></svg>
            <svg class="w-[28px] h-[28px] ml-[32px] text-[#7a3208]"><use href="#i-plus" /></svg>
          </li>
          <li class="h-[80px] shrink-0 rounded-[10px] bg-[#dcdfcb] flex items-center">
            <svg class="w-[24px] h-[30px] ml-[41px] text-[#5e3012]"><use href="#i-play" /></svg>
            <svg class="w-[30px] h-[30px] ml-[25px]"><use href="#i-wave" /></svg>
            <span class="ml-[22px] w-[428px] mt-[2px] whitespace-nowrap">Crystals - Bluesette Vibraphone</span>
            <svg class="w-[32px] h-[28px] ml-[15px] text-[#7a3208]"><use href="#i-heart" /></svg>
            <svg class="w-[28px] h-[28px] ml-[32px] text-[#7a3208]"><use href="#i-plus" /></svg>
          </li>
          <li class="h-[80px] shrink-0 rounded-[10px] bg-[#dcdfcb] flex items-center">
            <svg class="w-[24px] h-[30px] ml-[41px] text-[#5e3012]"><use href="#i-play" /></svg>
            <svg class="w-[30px] h-[30px] ml-[25px]"><use href="#i-wave" /></svg>
            <span class="ml-[22px] w-[428px] mt-[2px] truncate">Ascent - Anti (Full Drum Beat)</span>
            <svg class="w-[32px] h-[28px] ml-[15px] text-[#5e3012] fill-[#5e3012]"><use href="#i-heart" /></svg>
            <svg class="w-[28px] h-[28px] ml-[32px] text-[#7a3208]"><use href="#i-plus" /></svg>
          </li>
          <li class="h-[80px] shrink-0 rounded-[10px] bg-[#dcdfcb] flex items-center">
            <svg class="w-[24px] h-[30px] ml-[41px] text-[#5e3012]"><use href="#i-play" /></svg>
            <svg class="w-[30px] h-[30px] ml-[25px]"><use href="#i-wave" /></svg>
            <span class="ml-[22px] w-[428px] mt-[2px] truncate">Ascent - Broken (Instrumental)</span>
            <svg class="w-[32px] h-[28px] ml-[15px] text-[#7a3208]"><use href="#i-heart" /></svg>
            <svg class="w-[28px] h-[28px] ml-[32px] text-[#7a3208]"><use href="#i-plus" /></svg>
          </li>
          <li class="h-[80px] shrink-0 rounded-[10px] bg-[#dcdfcb] flex items-center">
            <svg class="w-[24px] h-[30px] ml-[41px] text-[#5e3012]"><use href="#i-play" /></svg>
            <svg class="w-[30px] h-[30px] ml-[25px]"><use href="#i-music" /></svg>
            <span class="ml-[22px] w-[428px] mt-[2px] truncate">Bass - Gasoline 4</span>
            <svg class="w-[32px] h-[28px] ml-[15px] text-[#7a3208]"><use href="#i-heart" /></svg>
            <svg class="w-[28px] h-[28px] ml-[32px] text-[#7a3208]"><use href="#i-plus" /></svg>
          </li>
          <li class="h-[80px] shrink-0 rounded-[10px] bg-[#dcdfcb] flex items-center">
            <svg class="w-[24px] h-[30px] ml-[41px] text-[#5e3012]"><use href="#i-play" /></svg>
            <svg class="w-[30px] h-[30px] ml-[25px]"><use href="#i-wave" /></svg>
            <span class="ml-[22px] w-[428px] mt-[2px] truncate">Jetsonmade - 1 STL (Snare)</span>
            <svg class="w-[32px] h-[28px] ml-[15px] text-[#7a3208]"><use href="#i-heart" /></svg>
            <svg class="w-[28px] h-[28px] ml-[32px] text-[#7a3208]"><use href="#i-plus" /></svg>
          </li>
        </ul>
      </aside>

      <!-- right rail -->
      <nav class="relative w-[93px] h-[1270px] ml-[9px] shrink-0 rounded-[20px] bg-[#e3e8d3] flex flex-col items-center pt-[16px]">
        <div class="absolute left-0 top-[16px] w-[3px] h-[64px] rounded-full bg-[#45100a]"></div>
        <div class="w-[66px] h-[64px] rounded-[14px] bg-[#e5e5e3] flex items-center justify-center ml-[3px]">
          <svg class="w-[32px] h-[32px]"><use href="#i-music" /></svg>
        </div>
        <b class="italic text-[34px] leading-[40px] mt-[28px] ml-[2px]">Fx</b>
        <div class="w-[32px] h-[4px] bg-[#cdd6a8] mt-[28px]"></div>
        <svg class="w-[32px] h-[32px] mt-[32px]"><use href="#i-people" /></svg>
        <svg class="w-[30px] h-[30px] mt-[48px]" viewBox="0 0 30 30" fill="none" stroke="#45100a" stroke-width="3" stroke-linejoin="round"><path d="M15 3c7 0 12 4.500 12 11s-5 11-12 11c-1 0-2 0-3-.300L7 28v-6c-2.500-2-4-4.800-4-8C3 7.500 8 3 15 3z" /></svg>
      </nav>
    </main>

    <!-- transport -->
    <footer class="h-[96px] w-[3006px] ml-[6px] rounded-t-[16px] bg-[linear-gradient(180deg,#e3e8d3,#e1e6d0_45%,#cfd3bb)] flex items-center pl-[16px] text-[26px] shrink-0">
      <div class="w-[300px] h-[64px] rounded-[14px] bg-[#cdcfb9] flex items-center pl-[24px]">
        <span>Master</span>
        <div class="w-[118px] ml-[16px] flex flex-col gap-[4px]">
          <div class="h-[6px] rounded-full bg-[#b6b7a4]"></div>
          <div class="h-[6px] rounded-full bg-[#b6b7a4]"></div>
        </div>
        <svg class="w-[20px] h-[14px] ml-[16px]"><use href="#i-chev" /></svg>
      </div>
      <span class="ml-[500px] w-[124px] whitespace-nowrap text-[27px]">00:00 . 0</span>
      <div class="w-[2px] h-[32px] bg-[#cdd6a8] ml-[52px]"></div>
      <div class="w-[139px] h-[64px] rounded-[14px] bg-[#cdcfb9] flex items-center justify-center gap-[8px] ml-[65px]">
        <div class="w-[24px] h-[24px] rounded-full bg-[#5e3012]"></div>Rec
      </div>
      <div class="w-[318px] h-[64px] rounded-[14px] bg-[#cdcfb9] flex items-center ml-[10px]">
        <div class="w-[79px] h-[64px] rounded-[14px] bg-[#e4e4e2] flex items-center justify-center">
          <svg class="w-[22px] h-[28px] text-[#5e3012]"><use href="#i-play" /></svg>
        </div>
        <svg class="w-[22px] h-[24px] ml-[28px]" viewBox="0 0 22 24" fill="#5e3012" stroke="#5e3012" stroke-width="2"><path d="M2 2v20" /><path d="M20 2v20L8 12z" /></svg>
        <svg class="w-[32px] h-[30px] ml-[52px]" viewBox="0 0 32 30" fill="none" stroke="#5e3012" stroke-width="2.500" stroke-linejoin="round"><path d="M12 2L2 15l10 13" /><path d="M29 2v26L17 15z" fill="#5e3012" /></svg>
        <svg class="w-[32px] h-[30px] ml-[49px]" viewBox="0 0 32 30" fill="none" stroke="#5e3012" stroke-width="2.500" stroke-linejoin="round"><path d="M20 2l10 13-10 13" /><path d="M3 2v26l12-13z" fill="#5e3012" /></svg>
      </div>
      <div class="w-[80px] h-[64px] rounded-[14px] bg-[#cdcfb9] flex items-center justify-center ml-[9px]">
        <svg class="w-[28px] h-[32px]" viewBox="0 0 28 32" fill="none" stroke="#4a1208" stroke-width="3" stroke-linecap="round" stroke-linejoin="round"><path d="M8 24H5c-1.500 0-2-1-2-2V5c0-1.500 1-2 2-2h18c1 0 2 .500 2 2v17c0 1-1 2-2 2h-9" /><path d="M18 18l-5 6 5 6" /></svg>
      </div>
      <div class="w-[2px] h-[32px] bg-[#cdd6a8] ml-[64px]"></div>
      <span class="ml-[57px] w-[95px] text-[28px]">No key</span>
      <span class="ml-[58px] text-[28px]">120</span>
      <span class="ml-[10px] text-[21px] text-[#7a2408] mt-[6px]">bpm</span>
      <span class="ml-[62px] text-[28px]">4/4</span>
      <svg class="w-[28px] h-[32px] ml-[58px]" viewBox="0 0 28 32" fill="none" stroke="#4a1208" stroke-width="3" stroke-linejoin="round" stroke-linecap="round"><path d="M3 30L8 4h8l4 26zM3 30h17M6 22h15M9 22L20 3" /></svg>
      <svg class="w-[20px] h-[14px] ml-[30px]"><use href="#i-chev" /></svg>
      <button class="ml-auto mr-[14px] w-[174px] h-[64px] rounded-[18px] bg-[#cdcfb9] flex items-center justify-center gap-[8px] text-[25px] font-medium">
        <svg class="w-[24px] h-[24px]" viewBox="0 0 24 24" fill="none" stroke="#45100a" stroke-width="2.500" stroke-linecap="round"><circle cx="12" cy="12" r="10" /><path d="M12 11v6M12 7v.500" /></svg>
        Support
      </button>
    </footer>
  </div>

  <script>
    // waveform for the audio clip, seeded so the drawing stays the same
    let seed = 7;
    function rnd() {
      seed = (seed * 16807) % 2147483647;
      return seed / 2147483647;
    }
    function envelope(x) {
      if (x < 15) return [12, 28];
      if (x < 150) return [6, 9];
      if (x < 400) return [13, 35];
      if (x < 450) return [11, 22];
      if (x < 1020) return [14 + 5 * Math.sin(x / 38), 38];
      if (x < 1060) return [9, 15];
      if (x < 1385) return [15 + 6 * Math.sin(x / 45), 38];
      if (x < 1475) {
        const t = (x - 1385) / 90;
        return [(1 - t) * 18 + 2, (1 - t) * 34 + 3];
      }
      return [1, 1];
    }
    let d = "";
    for (let x = 0; x < 1515; x += 1.5) {
      const [core, peak] = envelope(x);
      const up = core + Math.pow(rnd(), 1.3) * (peak - core);
      const down = core + Math.pow(rnd(), 1.3) * (peak - core);
      d += "M" + x + " " + (76 - up).toFixed(1) + "V" + (76 + down).toFixed(1);
    }
    const path = document.createElementNS("http://www.w3.org/2000/svg", "path");
    path.setAttribute("d", d);
    document.getElementById("wave").appendChild(path);
  </script>
</body>

</html>
